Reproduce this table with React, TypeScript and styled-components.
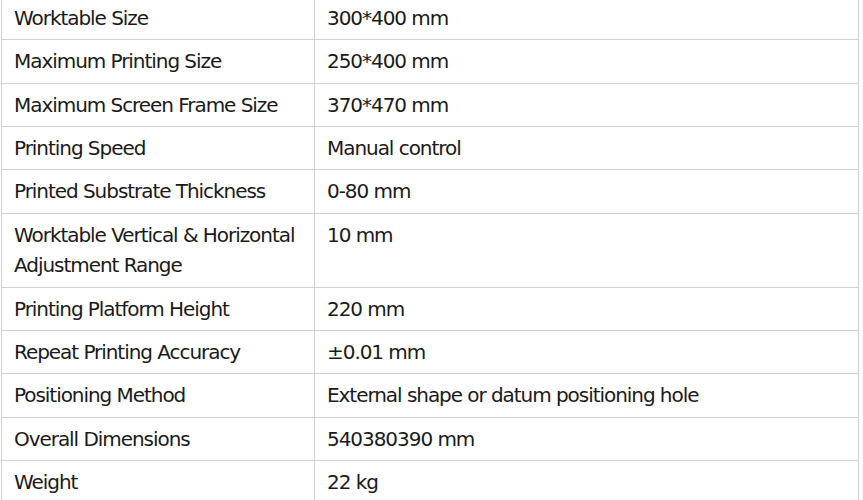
import React from "react";
import styled, { createGlobalStyle } from "styled-components";

const Global = createGlobalStyle`
  html, body { margin: 0; padding: 0; background: #ffffff; }
  body { font-family: "DejaVu Sans", "Liberation Sans", sans-serif; color: #1a1a1a; overflow: hidden; }
`;

const Wrap = styled.div`
  margin: -4px 0 0 1px;
  width: 858px;
`;

const Table = styled.table`
  width: 100%;
  border-collapse: collapse;
  table-layout: fixed;
`;

const Row = styled.tr``;

const Cell = styled.td<{ $key?: boolean }>`
  box-sizing: border-box;
  width: ${(p) => (p.$key ? "313px" : "auto")};
  border: 1px solid #d2d2d2;
  padding: 5.85px 12px;
  font-size: 20px;
  line-height: 30.65px;
  letter-spacing: -1.05px;
  vertical-align: top;
  text-align: left;
`;

const rows: [string, string][] = [
  ["Worktable Size", "300*400 mm"],
  ["Maximum Printing Size", "250*400 mm"],
  ["Maximum Screen Frame Size", "370*470 mm"],
  ["Printing Speed", "Manual control"],
  ["Printed Substrate Thickness", "0-80 mm"],
  ["Worktable Vertical & Horizontal Adjustment Range", "10 mm"],
  ["Printing Platform Height", "220 mm"],
  ["Repeat Printing Accuracy", "±0.01 mm"],
  ["Positioning Method", "External shape or datum positioning hole"],
  ["Overall Dimensions", "540380390 mm"],
  ["Weight", "22 kg"],
];

export default function App() {
  return (
    <>
      <Global />
      <Wrap>
        <Table>
          <tbody>
            {rows.map(([k, v]) => (
              <Row key={k}>
                <Cell $key>{k}</Cell>
                <Cell>{v}</Cell>
              </Row>
            ))}
          </tbody>
        </Table>
      </Wrap>
    </>
  );
}
